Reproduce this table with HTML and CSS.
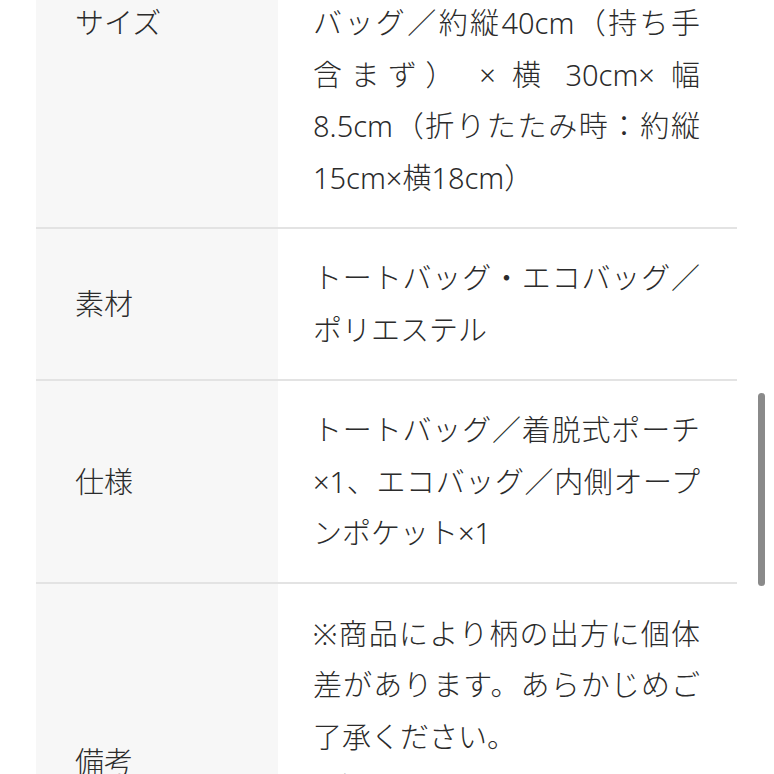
FILE: index.html
```html
<!DOCTYPE html>
<html lang="ja">
<head>
<meta charset="utf-8">
<title>商品仕様</title>
<link rel="stylesheet" href="styles.css">
</head>
<body>
<div class="page">
  <div class="spec">
    <div class="row">
      <div class="label">サイズ</div>
      <div class="value">トートバッグ／約縦36cm（持ち手含まず）×横42cm×幅14cm、エコ<br>バッグ／約縦40cm（持ち手含まず） × 横 30cm× 幅 8.5cm（折りたたみ時：約縦15cm×横18cm）</div>
    </div>
    <div class="row">
      <div class="label">素材</div>
      <div class="value">トートバッグ・エコバッグ／ポリエステル</div>
    </div>
    <div class="row">
      <div class="label">仕様</div>
      <div class="value">トートバッグ／着脱式ポーチ×1、エコバッグ／内側オープンポケット×1</div>
    </div>
    <div class="row">
      <div class="label">備考</div>
      <div class="value">※商品により柄の出方に個体差があります。あらかじめご了承ください。<br>※柄をお選びいただくことはできません。ランダムでのお届けとなります。</div>
    </div>
  </div>
</div>
<div class="scrollbar"></div>
</body>
</html>
```
FILE: styles.css
```css
html, body {
  margin: 0;
  padding: 0;
  background: #ffffff;
  overflow: hidden;
}
body {
  font-family: "Noto Sans", "Noto Sans CJK JP", sans-serif;
  color: #2b2b2b;
  font-size: 29px;
  font-weight: 300;
  line-height: 51.5px;
}
.page {
  height: 774px;
  overflow: hidden;
  padding-left: 36px;
  padding-right: 37px;
}
.spec {
  margin-top: -181px;
}
.row {
  display: flex;
  border-bottom: 2px solid #e3e3e3;
}
.label {
  flex: 0 0 242px;
  box-sizing: border-box;
  background: #f7f7f7;
  padding-left: 39px;
  display: flex;
  align-items: center;
}
.value {
  flex: 1;
  padding: 23.5px 37px 23.5px 35px;
  text-align: justify;
}
.scrollbar {
  position: absolute;
  left: 758px;
  top: 393px;
  width: 7px;
  height: 193px;
  background: #8a8a8a;
  border-radius: 4px;
}
```
